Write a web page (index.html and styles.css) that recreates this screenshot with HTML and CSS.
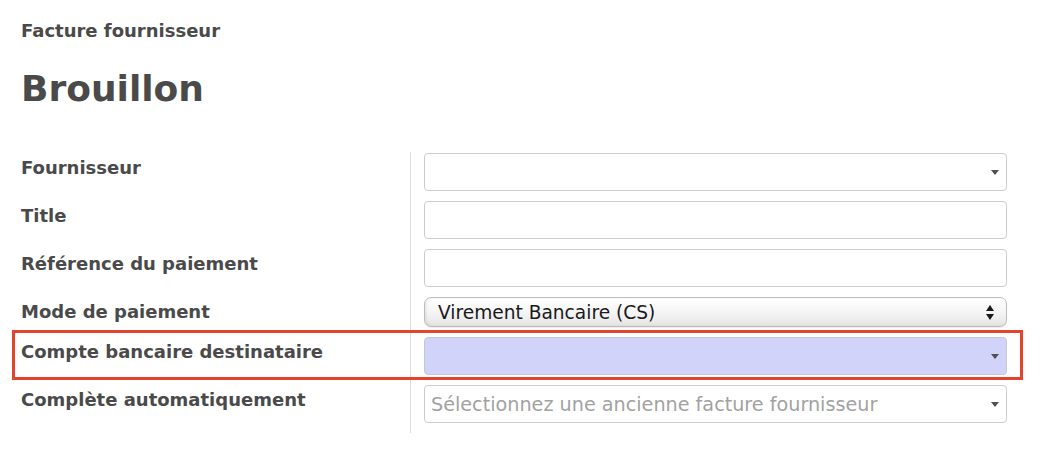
FILE: index.html
```html
<!DOCTYPE html>
<html lang="fr">
<head>
<meta charset="utf-8">
<title>Facture fournisseur</title>
<link rel="stylesheet" href="styles.css">
</head>
<body>
<div class="page">
  <div class="subtitle">Facture fournisseur</div>
  <h1 class="title">Brouillon</h1>
  <div class="form">
    <div class="divider"></div>

    <div class="label r1">Fournisseur</div>
    <div class="field r1 combo"><span class="caret"></span></div>

    <div class="label r2">Title</div>
    <div class="field r2"></div>

    <div class="label r3">Référence du paiement</div>
    <div class="field r3"></div>

    <div class="label r4">Mode de paiement</div>
    <div class="select r4">
      <span class="select-text">Virement Bancaire (CS)</span>
      <span class="updown"><span class="up"></span><span class="down"></span></span>
    </div>

    <div class="label r5">Compte bancaire destinataire</div>
    <div class="field r5 combo required"><span class="caret"></span></div>
    <div class="highlight r5"></div>

    <div class="label r6">Complète automatiquement</div>
    <div class="field r6 combo"><span class="placeholder">Sélectionnez une ancienne facture fournisseur</span><span class="caret"></span></div>
  </div>
</div>
</body>
</html>
```

FILE: styles.css
```css
html, body {
  margin: 0;
  padding: 0;
  background: #ffffff;
}

body {
  font-family: "DejaVu Sans", "Liberation Sans", sans-serif;
  color: #4a4a4a;
}

.page {
  padding-left: 21px;
}

.subtitle {
  margin-top: 20px;
  font-size: 18px;
  line-height: 22px;
  font-weight: bold;
}

.title {
  margin: 25px 0 0 0;
  font-size: 36px;
  line-height: 44px;
  font-weight: bold;
}

.form {
  margin-top: 42px;
  display: grid;
  grid-template-columns: 389px 14px 583px;
  grid-template-rows: 38px 38px 38px 30px 38px 38px 0px;
  row-gap: 10px;
}

.divider {
  grid-column: 2;
  grid-row: 1 / 8;
  border-left: 1px solid #dcdcdc;
  margin: -1px 0 -1px 0;
}

.r1 { grid-row: 1; }
.r2 { grid-row: 2; }
.r3 { grid-row: 3; }
.r4 { grid-row: 4; }
.r5 { grid-row: 5; }
.r6 { grid-row: 6; }

.label {
  grid-column: 1;
  font-size: 18px;
  line-height: 22px;
  font-weight: bold;
  padding-top: 4px;
}

.field {
  grid-column: 3;
  box-sizing: border-box;
  border: 1px solid #cccccc;
  border-radius: 4px;
  background: #ffffff;
  display: flex;
  align-items: center;
  padding: 0 7px 0 6px;
}

.combo {
  justify-content: space-between;
}

.combo .caret {
  margin-left: auto;
}

.caret {
  width: 0;
  height: 0;
  border-left: 4px solid transparent;
  border-right: 4px solid transparent;
  border-top: 5px solid #505050;
}

.required {
  background: #d1d3f8;
  border-color: #c6c7d8;
}

.placeholder {
  font-size: 19.2px;
  color: #a2a2a2;
  white-space: nowrap;
}

.select {
  grid-column: 3;
  box-sizing: border-box;
  border: 1px solid #bcbcbc;
  border-radius: 7px;
  background: linear-gradient(#ffffff 0%, #f6f6f6 45%, #ececec 80%, #e2e2e2 100%);
  box-shadow: inset 2px 0 2px rgba(0, 0, 0, 0.06), 0 1px 1px rgba(0, 0, 0, 0.08);
  display: flex;
  align-items: center;
  padding: 0 12px 0 13px;
}

.select-text {
  font-size: 18.6px;
  color: #1a1a1a;
  white-space: nowrap;
}

.updown {
  margin-left: auto;
  display: flex;
  flex-direction: column;
  gap: 3px;
}

.up, .down {
  width: 0;
  height: 0;
  border-left: 4px solid transparent;
  border-right: 4px solid transparent;
}

.up {
  border-bottom: 6px solid #1a1a1a;
}

.down {
  border-top: 6px solid #1a1a1a;
}

.highlight {
  grid-column: 1 / -1;
  margin: -7px -16px -5px -9px;
  border: 3px solid #e5432e;
  pointer-events: none;
}
```
